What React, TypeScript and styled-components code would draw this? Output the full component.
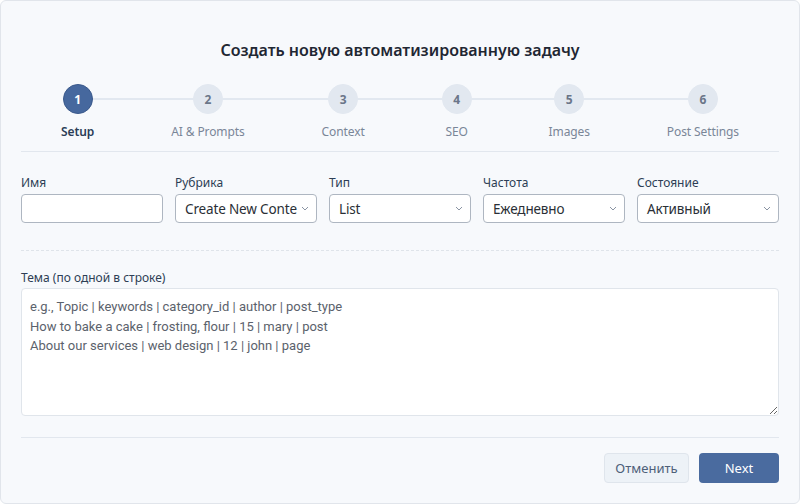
import styled, { createGlobalStyle } from "styled-components";

const steps = ["Setup", "AI & Prompts", "Context", "SEO", "Images", "Post Settings"];

const selects = [
    { label: "Рубрика", value: "Create New Conte" },
    { label: "Тип", value: "List" },
    { label: "Частота", value: "Ежедневно" },
    { label: "Состояние", value: "Активный" },
];

const topicsHint =
    "e.g., Topic | keywords | category_id | author | post_type\n" +
    "How to bake a cake | frosting, flour | 15 | mary | post\n" +
    "About our services | web design | 12 | john | page";

function Chevron() {
    return (
        <svg width="8" height="5" viewBox="0 0 8 5" fill="none">
            <path d="M1 1l3 3 3-3" stroke="#8a94a3" strokeWidth="1" />
        </svg>
    );
}

function App() {
    return (
        <>
            <GlobalStyle />
            <Panel>
                <Title>Создать новую автоматизированную задачу</Title>
                <Steps>
                    {steps.map((name, i) => (
                        <Step key={name}>
                            <Circle $active={i === 0}>{i + 1}</Circle>
                            <StepLabel $active={i === 0}>{name}</StepLabel>
                        </Step>
                    ))}
                </Steps>

                <FieldRow>
                    <Field>
                        <Label>Имя</Label>
                        <Input type="text" />
                    </Field>
                    {selects.map((s) => (
                        <Field key={s.label}>
                            <Label>{s.label}</Label>
                            <Select>
                                <span>{s.value}</span>
                                <Chevron />
                            </Select>
                        </Field>
                    ))}
                </FieldRow>

                <Topics>
                    <Label>Тема (по одной в строке)</Label>
                    <TextArea placeholder={topicsHint} />
                </Topics>

                <Footer>
                    <CancelButton>Отменить</CancelButton>
                    <NextButton>Next</NextButton>
                </Footer>
            </Panel>
        </>
    );
}

const GlobalStyle = createGlobalStyle`
* { box-sizing: border-box; }
body {
    margin: 0;
    background: #ffffff;
    font-family: "Noto Sans", "Open Sans", sans-serif;
}
`;

const Panel = styled.div`
width: 800px;
height: 504px;
background: #f7f9fc;
border: 1px solid #e1e5eb;
border-radius: 6px;
padding: 36px 20px 20px;
display: flex;
flex-direction: column;
`;

const Title = styled.h2`
margin: 0;
text-align: center;
font-size: 16px;
line-height: 26px;
font-weight: 600;
color: #1f2733;
`;

const Steps = styled.div`
position: relative;
display: flex;
justify-content: space-between;
padding: 21px 40px 11px;
border-bottom: 1px solid #e2e7ee;
&::before {
    content: "";
    position: absolute;
    top: 35px;
    left: 56px;
    right: 72px;
    height: 2px;
    background: #e2e8f0;
}
`;

const Step = styled.div`
position: relative;
display: flex;
flex-direction: column;
align-items: center;
gap: 10px;
`;

const Circle = styled.div<{ $active: boolean }>`
width: 30px;
height: 30px;
border-radius: 50%;
display: flex;
align-items: center;
justify-content: center;
font-size: 12px;
font-weight: 700;
color: ${(p) => (p.$active ? "#ffffff" : "#6b7689")};
background: ${(p) => (p.$active ? "#46689e" : "#e2e8f0")};
border: 1px solid ${(p) => (p.$active ? "#3b5a8c" : "#e2e8f0")};
`;

const StepLabel = styled.span<{ $active: boolean }>`
font-size: 12px;
line-height: 16px;
white-space: nowrap;
letter-spacing: -0.1px;
font-weight: ${(p) => (p.$active ? 600 : 400)};
color: ${(p) => (p.$active ? "#2b3d57" : "#7a8698")};
`;

const FieldRow = styled.div`
display: grid;
grid-template-columns: repeat(5, 1fr);
gap: 12px;
padding: 23px 0 27px;
border-bottom: 1px dashed #dfe4ea;
`;

const Field = styled.div`
display: flex;
flex-direction: column;
gap: 3px;
min-width: 0;
`;

const Label = styled.label`
font-size: 12px;
line-height: 16px;
color: #2d3e55;
`;

const Input = styled.input`
height: 29px;
border: 1px solid #aeb6c1;
border-radius: 4px;
background: #ffffff;
outline: none;
`;

const Select = styled.div`
height: 29px;
border: 1px solid #aeb6c1;
border-radius: 4px;
background: #ffffff;
padding: 0 7px 0 9px;
display: flex;
align-items: center;
justify-content: space-between;
font-size: 13.5px;
letter-spacing: -0.15px;
color: #2a2f36;
span {
    white-space: nowrap;
}
svg {
    flex-shrink: 0;
    margin-left: 2px;
}
`;

const Topics = styled.div`
display: flex;
flex-direction: column;
gap: 2px;
padding: 19px 0 21px;
border-bottom: 1px solid #e2e7ee;
`;

const TextArea = styled.textarea`
height: 128px;
border: 1px solid #e0e5eb;
border-radius: 4px;
background: #ffffff;
padding: 8px 8px;
font-family: Roboto, "Noto Sans", sans-serif;
font-size: 13px;
line-height: 19.5px;
outline: none;
&::placeholder {
    color: #5b626c;
}
`;

const Footer = styled.div`
display: flex;
justify-content: flex-end;
gap: 10px;
padding-top: 15px;
`;

const CancelButton = styled.button`
width: 85px;
height: 30px;
border: 1px solid #dfe5ec;
border-radius: 4px;
background: #edf2f7;
color: #4e6079;
font-family: "Noto Sans", "Open Sans", sans-serif;
font-size: 13px;
`;

const NextButton = styled.button`
width: 80px;
height: 30px;
border: none;
border-radius: 4px;
background: #4a6b9f;
color: #ffffff;
font-family: "Noto Sans", "Open Sans", sans-serif;
font-size: 13px;
`;

export default App;
